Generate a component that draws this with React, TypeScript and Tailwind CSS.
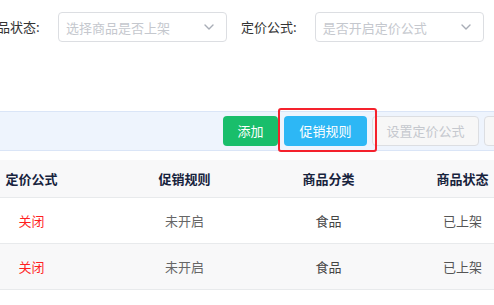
import React from "react";

const font = { fontFamily: '"Noto Sans CJK SC", "Noto Sans", sans-serif' };

function Chevron() {
  return (
    <svg width="10" height="6" viewBox="0 0 10 6" fill="none">
      <path d="M1 1 L5 5 L9 1" stroke="#a8adb6" strokeWidth="1.4" strokeLinecap="round" strokeLinejoin="round" />
    </svg>
  );
}

function Select({ placeholder }: { placeholder: string }) {
  return (
    <div className="w-[169px] h-[30px] border border-[#dcdee2] rounded-[4px] bg-white flex items-center justify-between pl-[7px] pr-[12px]">
      <span className="text-[13px] text-[#c5c8ce] leading-none">{placeholder}</span>
      <Chevron />
    </div>
  );
}

const rows = [
  { price: "关闭", promo: "未开启", cat: "食品", status: "已上架" },
  { price: "关闭", promo: "未开启", cat: "食品", status: "已上架" },
];

export default function App() {
  return (
    <div className="w-[494px] h-[305px] overflow-hidden bg-white relative" style={font}>
      {/* filters */}
      <div className="flex items-center h-[30px] mt-[12px] -ml-[16px]">
        <span className="text-[13px] text-[#333] w-[56px] whitespace-nowrap">商品状态:</span>
        <div className="ml-[18px]">
          <Select placeholder="选择商品是否上架" />
        </div>
        <span className="text-[13px] text-[#333] ml-[14px] whitespace-nowrap">定价公式:</span>
        <div className="ml-[18px]">
          <Select placeholder="是否开启定价公式" />
        </div>
      </div>

      {/* toolbar */}
      <div className="mt-[69px] h-[40px] bg-[#eef4fd] border-y border-[#dae5f7] flex items-center pl-[223px] gap-[6px] whitespace-nowrap">
        <div className="h-[30px] w-[55px] shrink-0 rounded-[4px] bg-[#19be6b] text-white text-[13px] flex items-center justify-center">添加</div>
        <div className="h-[30px] w-[83px] shrink-0 rounded-[4px] bg-[#2db7f5] text-white text-[13px] flex items-center justify-center">促销规则</div>
        <div className="h-[30px] w-[107px] shrink-0 rounded-[4px] bg-[#f7f7f7] border border-[#dcdee2] text-[#c5c8ce] text-[13px] flex items-center justify-center -ml-px">设置定价公式</div>
        <div className="h-[30px] w-[80px] shrink-0 rounded-[4px] bg-[#f7f7f7] border border-[#dcdee2] -ml-px"></div>
      </div>

      {/* highlight overlay */}
      <div className="absolute left-[278px] top-[108px] w-[99px] h-[44px] border-2 border-[#f5222d] rounded-[3px]"></div>

      {/* table */}
      <div className="mt-[9px] overflow-hidden">
        <div className="-ml-[45px] w-[580px]">
          <div className="grid grid-cols-[153px_153px_135px_133px] h-[38px] bg-[#f8f8f9] border-b border-[#e8eaec] items-center text-[13px] font-bold text-[#17233d]">
            <div className="text-center">定价公式</div>
            <div className="text-center">促销规则</div>
            <div className="text-center">商品分类</div>
            <div className="text-center">商品状态</div>
          </div>
          {rows.map((r, i) => (
            <div
              key={i}
              className={
                "grid grid-cols-[153px_153px_135px_133px] h-[46px] border-b border-[#e8eaec] items-center text-[13px] " +
                (i % 2 === 1 ? "bg-[#f8f8f9]" : "bg-white")
              }
            >
              <div className="text-center text-[#ff1f1f]">{r.price}</div>
              <div className="text-center text-[#666]">{r.promo}</div>
              <div className="text-center text-[#444]">{r.cat}</div>
              <div className="text-center text-[#555]">{r.status}</div>
            </div>
          ))}
        </div>
      </div>
    </div>
  );
}
